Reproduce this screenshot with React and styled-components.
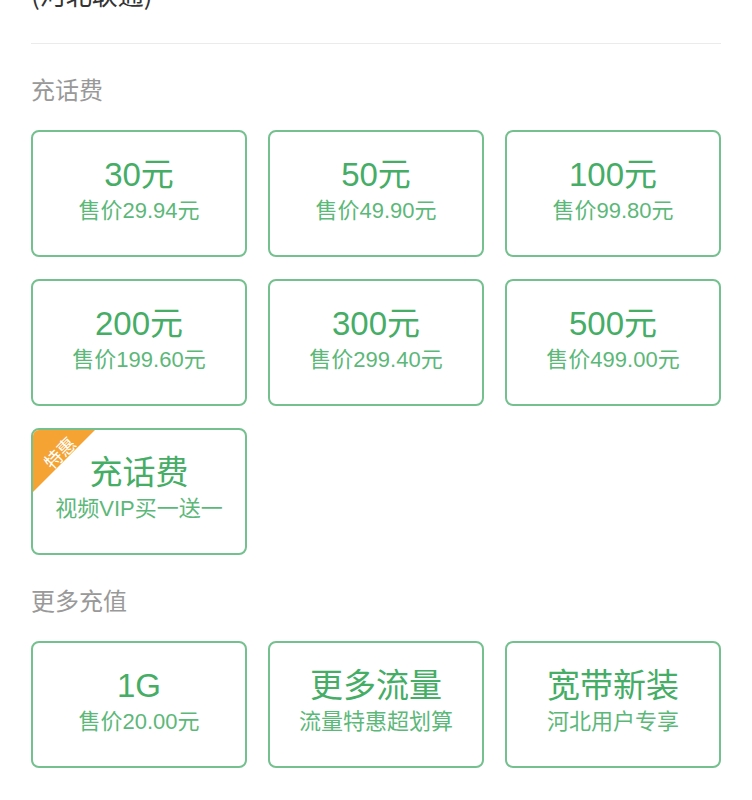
import React from 'react'
import styled, { createGlobalStyle } from 'styled-components'

const phoneCards = [
  { title: '30元', sub: '售价29.94元' },
  { title: '50元', sub: '售价49.90元' },
  { title: '100元', sub: '售价99.80元' },
  { title: '200元', sub: '售价199.60元' },
  { title: '300元', sub: '售价299.40元' },
  { title: '500元', sub: '售价499.00元' },
  { title: '充话费', sub: '视频VIP买一送一', badge: '特惠' },
]

const moreCards = [
  { title: '1G', sub: '售价20.00元' },
  { title: '更多流量', sub: '流量特惠超划算' },
  { title: '宽带新装', sub: '河北用户专享' },
]

export default function App() {
  return (
    <Page>
      <GlobalStyle />
      <Header>
        <Carrier>(河北联通)</Carrier>
      </Header>

      <SectionTitle>充话费</SectionTitle>
      <Grid>
        {phoneCards.map((c) => (
          <Card key={c.title + c.sub}>
            {c.badge && <Badge><BadgeText>{c.badge}</BadgeText></Badge>}
            <Title>{c.title}</Title>
            <Sub>{c.sub}</Sub>
          </Card>
        ))}
      </Grid>

      <SectionTitle>更多充值</SectionTitle>
      <Grid>
        {moreCards.map((c) => (
          <Card key={c.title}>
            <Title>{c.title}</Title>
            <Sub>{c.sub}</Sub>
          </Card>
        ))}
      </Grid>
    </Page>
  )
}

const GlobalStyle = createGlobalStyle`
  body {
    margin: 0;
    background: #fff;
    font-family: "Liberation Sans", "Noto Sans CJK SC", sans-serif;
  }
`;

const Page = styled.div`
  padding: 0 31px 40px;
  overflow: hidden;
`;

// the phone number line is scrolled mostly out of view, only its bottom shows
const Header = styled.div`
  height: 43px;
  border-bottom: 1px solid #ebebeb;
  overflow: hidden;
`;

const Carrier = styled.div`
  margin-top: -19px;
  font-size: 26px;
  line-height: 26px;
  color: #333;
  font-family: "Noto Sans CJK SC", sans-serif;
`;

const SectionTitle = styled.div`
  margin: 33px 0 29px;
  font-size: 24px;
  line-height: 24px;
  color: #999;
  font-family: "Noto Sans CJK SC", sans-serif;
`;

const Grid = styled.div`
  display: grid;
  grid-template-columns: repeat(3, 1fr);
  column-gap: 21px;
  row-gap: 22px;
`;

const Card = styled.div`
  position: relative;
  height: 127px;
  box-sizing: border-box;
  border: 2px solid #74c08f;
  border-radius: 8px;
  overflow: hidden;
  display: flex;
  flex-direction: column;
  align-items: center;
  justify-content: center;
  gap: 6px;
  padding-bottom: 5px;
`;

const Title = styled.div`
  font-size: 33px;
  line-height: 34px;
  color: #45ad66;
`;

const Sub = styled.div`
  font-size: 22px;
  line-height: 26px;
  color: #5cb879;
`;

const Badge = styled.div`
  position: absolute;
  top: 0;
  left: 0;
  width: 62px;
  height: 62px;
  background: #f5a332;
  clip-path: polygon(0 0, 100% 0, 0 100%);
`;

const BadgeText = styled.div`
  position: absolute;
  left: 4px;
  top: 12px;
  width: 44px;
  text-align: center;
  transform: rotate(-45deg);
  font-size: 18px;
  line-height: 20px;
  color: #fff;
  font-family: "Noto Sans CJK SC", sans-serif;
`;
